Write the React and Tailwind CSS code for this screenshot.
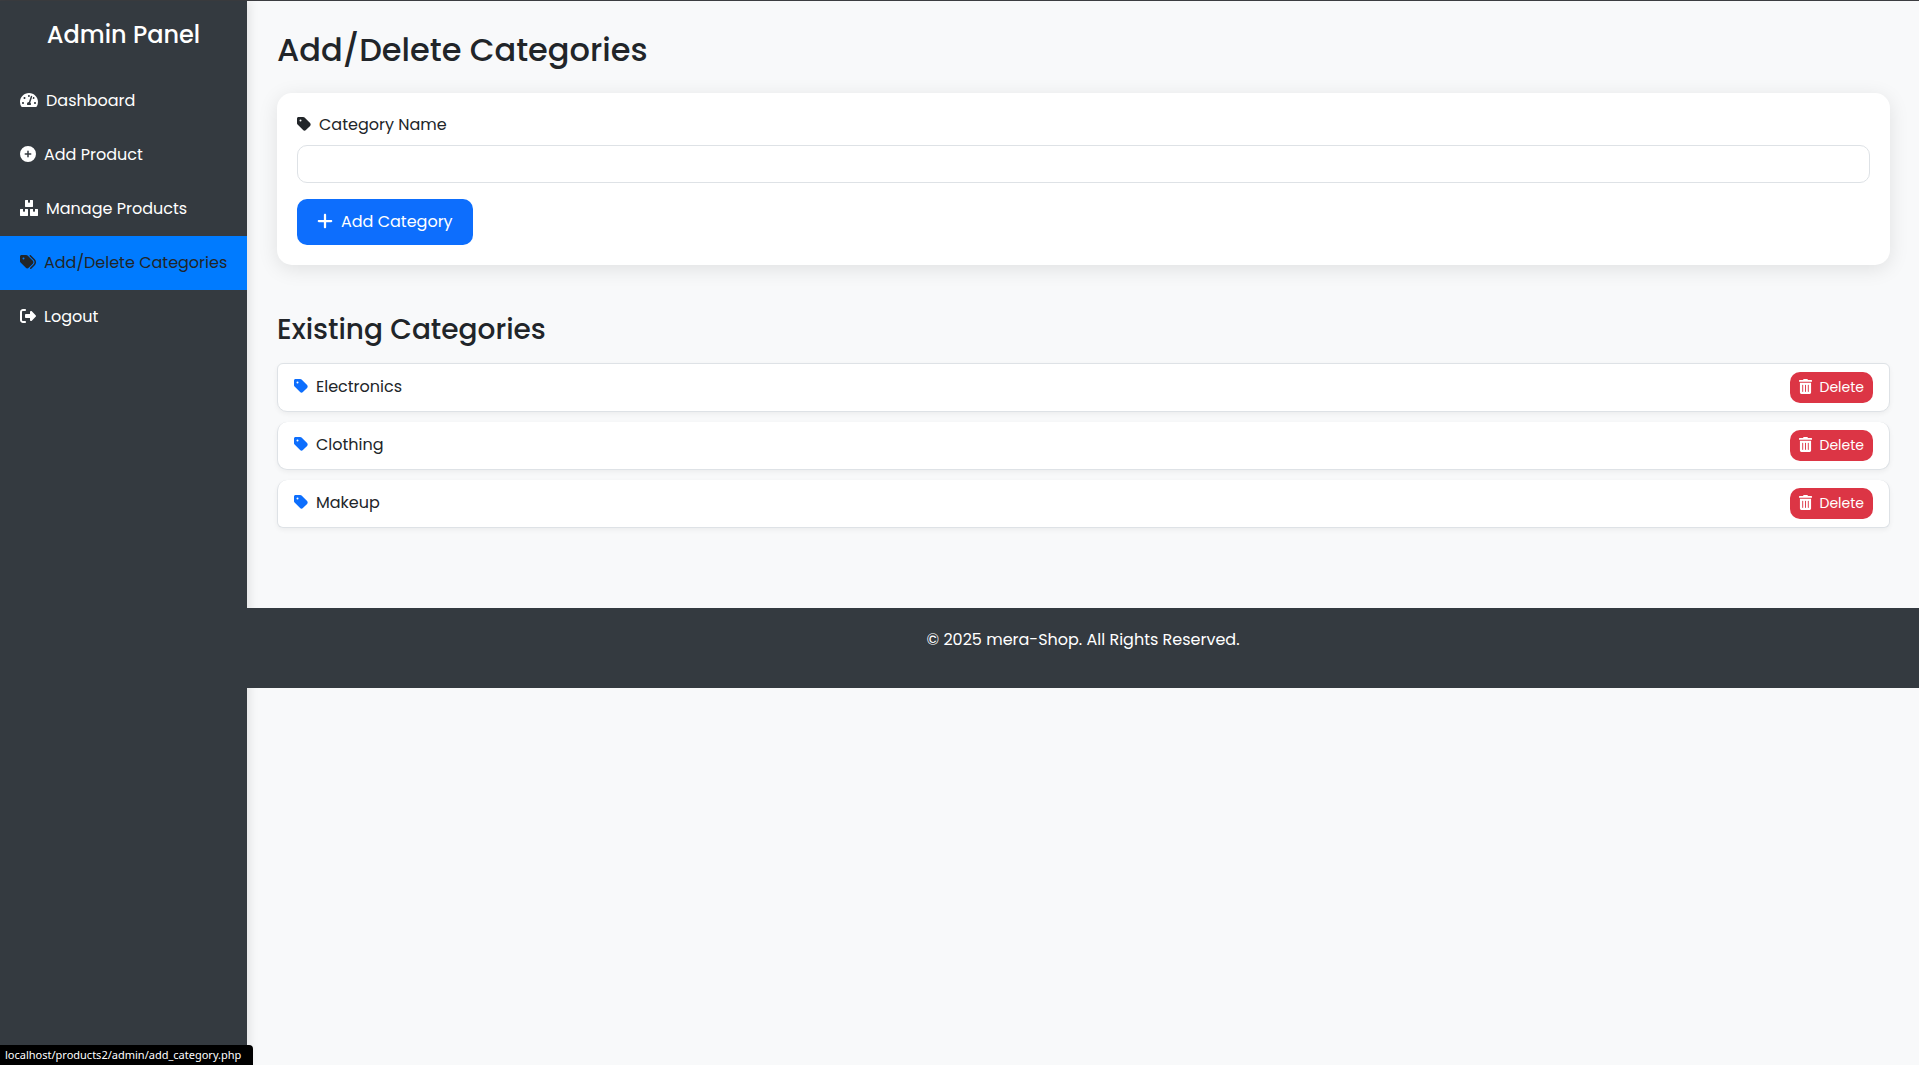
import { FaTachometerAlt, FaBoxes, FaTrashAlt } from "react-icons/fa";
import { FaCirclePlus, FaTags, FaTag, FaRightFromBracket, FaPlus } from "react-icons/fa6";

const navItems = [
  { label: "Dashboard", Icon: FaTachometerAlt, width: "w-[18px]" },
  { label: "Add Product", Icon: FaCirclePlus, width: "w-4" },
  { label: "Manage Products", Icon: FaBoxes, width: "w-[18px]" },
  { label: "Add/Delete Categories", Icon: FaTags, width: "w-4", active: true },
  { label: "Logout", Icon: FaRightFromBracket, width: "w-4" },
];

const categories = ["Electronics", "Clothing", "Makeup"];

function Sidebar() {
  return (
    <aside className="relative z-10 w-[247px] shrink-0 bg-[#343a40] pt-[19px] text-white shadow-[2px_0_10px_rgba(0,0,0,0.1)]">
      <h4 className="mb-[25px] text-center text-2xl leading-[29px] font-medium">Admin Panel</h4>
      <nav>
        {navItems.map(({ label, Icon, width, active }) => (
          <a
            key={label}
            href="#"
            className={`flex items-center gap-2 px-5 py-[15px] text-base leading-6 whitespace-nowrap ${active ? "bg-[#007bff] text-[#212529]" : "text-white"}`}
          >
            <Icon className={`mb-0.5 h-4 shrink-0 ${width}`} />
            {label}
          </a>
        ))}
      </nav>
    </aside>
  );
}

function CategoryForm() {
  return (
    <form className="rounded-[15px] bg-white p-5 shadow-[0_4px_20px_rgba(0,0,0,0.1)]" onSubmit={(e) => e.preventDefault()}>
      <label htmlFor="category" className="mb-2 flex items-center gap-2 leading-6">
        <FaTag className="mb-0.5 h-4 w-[14px]" />
        Category Name
      </label>
      <input id="category" type="text" className="mb-4 block h-[38px] w-full rounded-[10px] border border-[#dee2e6] bg-white px-3" />
      <button type="submit" className="flex h-[46px] items-center gap-2 rounded-[10px] bg-[#0d6efd] px-5 text-white">
        <FaPlus className="mb-0.5 h-[18px] w-4" />
        Add Category
      </button>
    </form>
  );
}

function CategoryList() {
  return (
    <ul className="flex flex-col gap-[10px]">
      {categories.map((name) => (
        <li
          key={name}
          className="flex items-start justify-between rounded-[10px] border border-t-0 border-[#dee2e6] bg-white px-4 py-2 shadow-[0_2px_5px_rgba(0,0,0,0.05)] first:rounded-t-md first:border-t last:rounded-b-md"
        >
          <span className="flex items-center gap-2 leading-[30px]">
            <FaTag className="mb-0.5 h-4 w-[14px] text-[#0d6efd]" />
            {name}
          </span>
          <button type="button" className="flex h-[31px] items-center gap-2 rounded-[10px] bg-[#dc3545] px-[9px] pb-0.5 text-sm text-white">
            <FaTrashAlt className="h-[15px] w-[13px]" />
            Delete
          </button>
        </li>
      ))}
    </ul>
  );
}

export default function App() {
  return (
    <div className="flex min-h-screen border-t border-[#3c3d41] bg-[#f8f9fa] font-[Poppins,Inter,sans-serif] text-base text-[#212529]">
      <Sidebar />
      <div className="min-w-0 flex-1">
        <main className="pt-[30px] pr-[29px] pb-20 pl-[30px]">
          <h2 className="mb-6 text-[32px] leading-[38px] font-medium">Add/Delete Categories</h2>
          <CategoryForm />
          <h3 className="mt-12 mb-4 text-[28px] leading-[34px] font-medium">Existing Categories</h3>
          <CategoryList />
        </main>
        <footer className="relative z-20 bg-[#343a40] px-5 pt-5 pb-9 text-center leading-6 text-white">
          © 2025 mera-Shop. All Rights Reserved.
        </footer>
      </div>
      <div className="fixed bottom-0 left-0 z-20 rounded-tr bg-black pr-3 pl-[5px] font-['Noto_Sans',sans-serif] text-[11px] leading-5 text-white">
        localhost/products2/admin/add_category.php
      </div>
    </div>
  );
}
